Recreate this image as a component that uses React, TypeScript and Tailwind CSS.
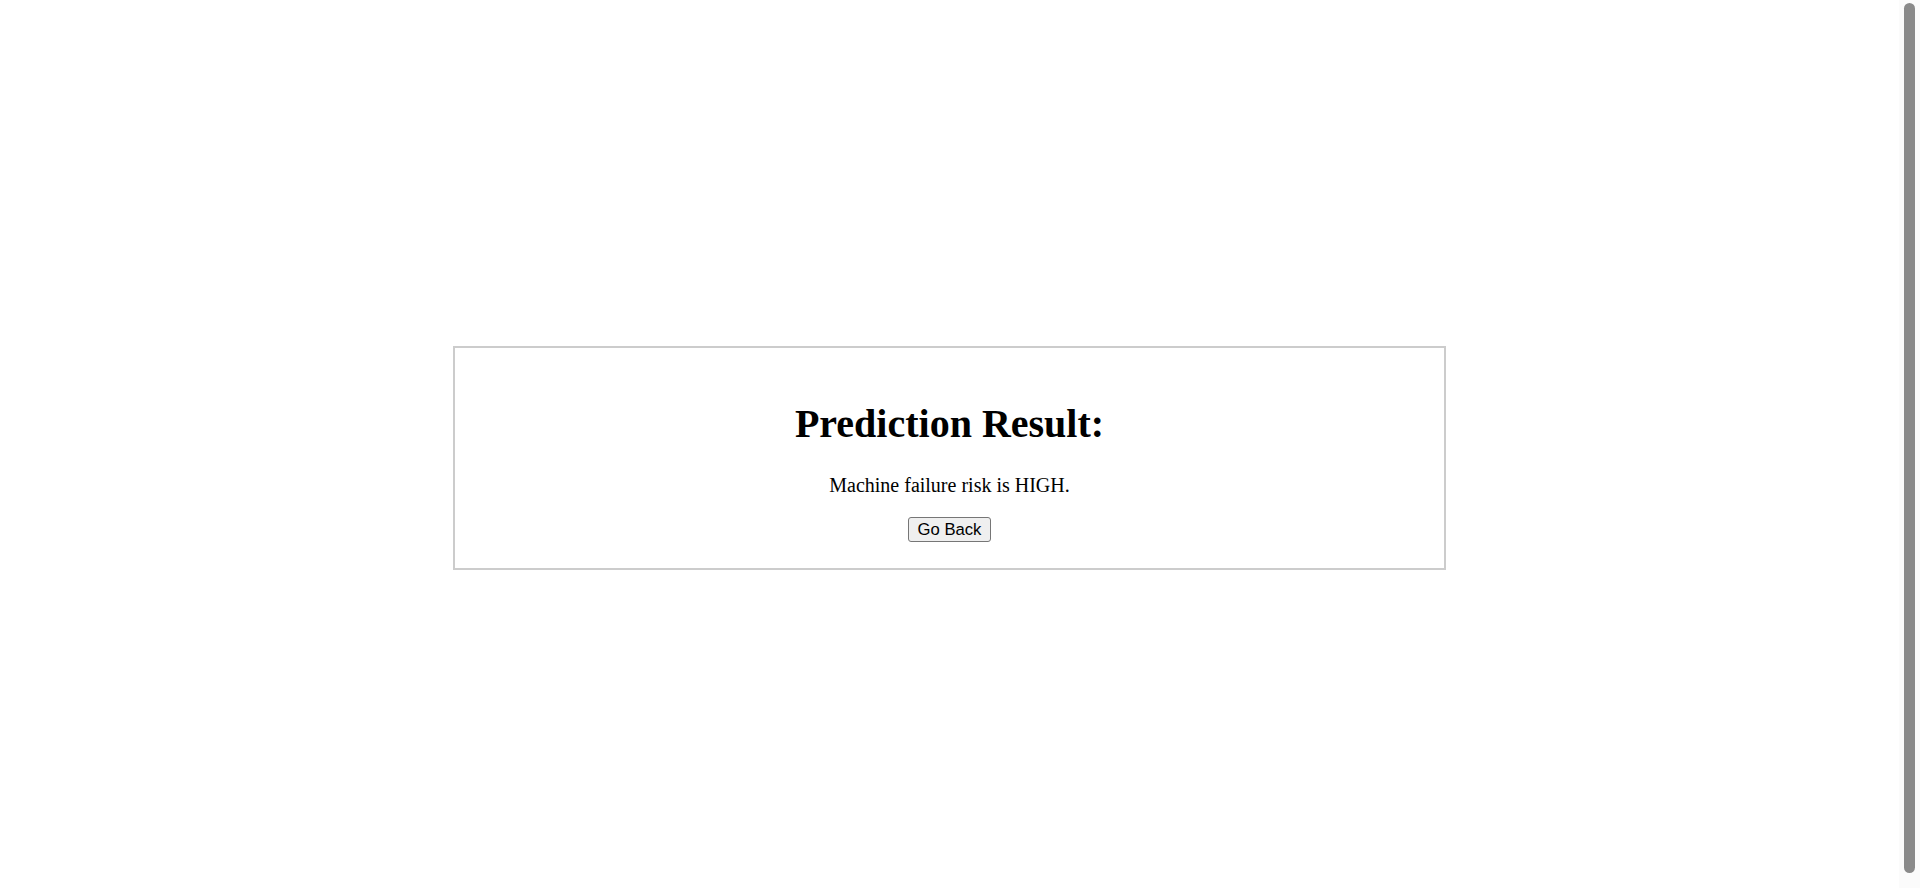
export default function App() {
  return (
    <div className="h-[888px] flex bg-white overflow-hidden">
      <main className="flex-1 pt-[28px] flex items-center justify-center font-['Liberation_Serif',serif] text-black">
        <div className="w-[993px] border-2 border-[#cccccc] px-[25px] py-[26px] text-center">
          <h1 className="text-[40px] font-bold leading-[46px] mt-[27px] mb-[27px]">
            Prediction Result:
          </h1>
          <p className="text-[20px] leading-[23px] mb-[20px]">Machine failure risk is HIGH.</p>
          <button
            className="font-['Liberation_Sans',Arial,sans-serif] text-[16.67px] leading-[19px] text-black bg-[#efefef] border-[1.5px] border-[#767676] rounded-[3px] px-[9px] py-[2px]"
            onClick={() => window.history.back()}
          >
            Go Back
          </button>
        </div>
      </main>

      {/* page scrollbar */}
      <div className="w-[21px] bg-[#fbfbfb] pt-[3px] pl-[5px]">
        <div className="w-[11px] h-[870px] rounded-full bg-[#8a8a8a]" />
      </div>
    </div>
  );
}
